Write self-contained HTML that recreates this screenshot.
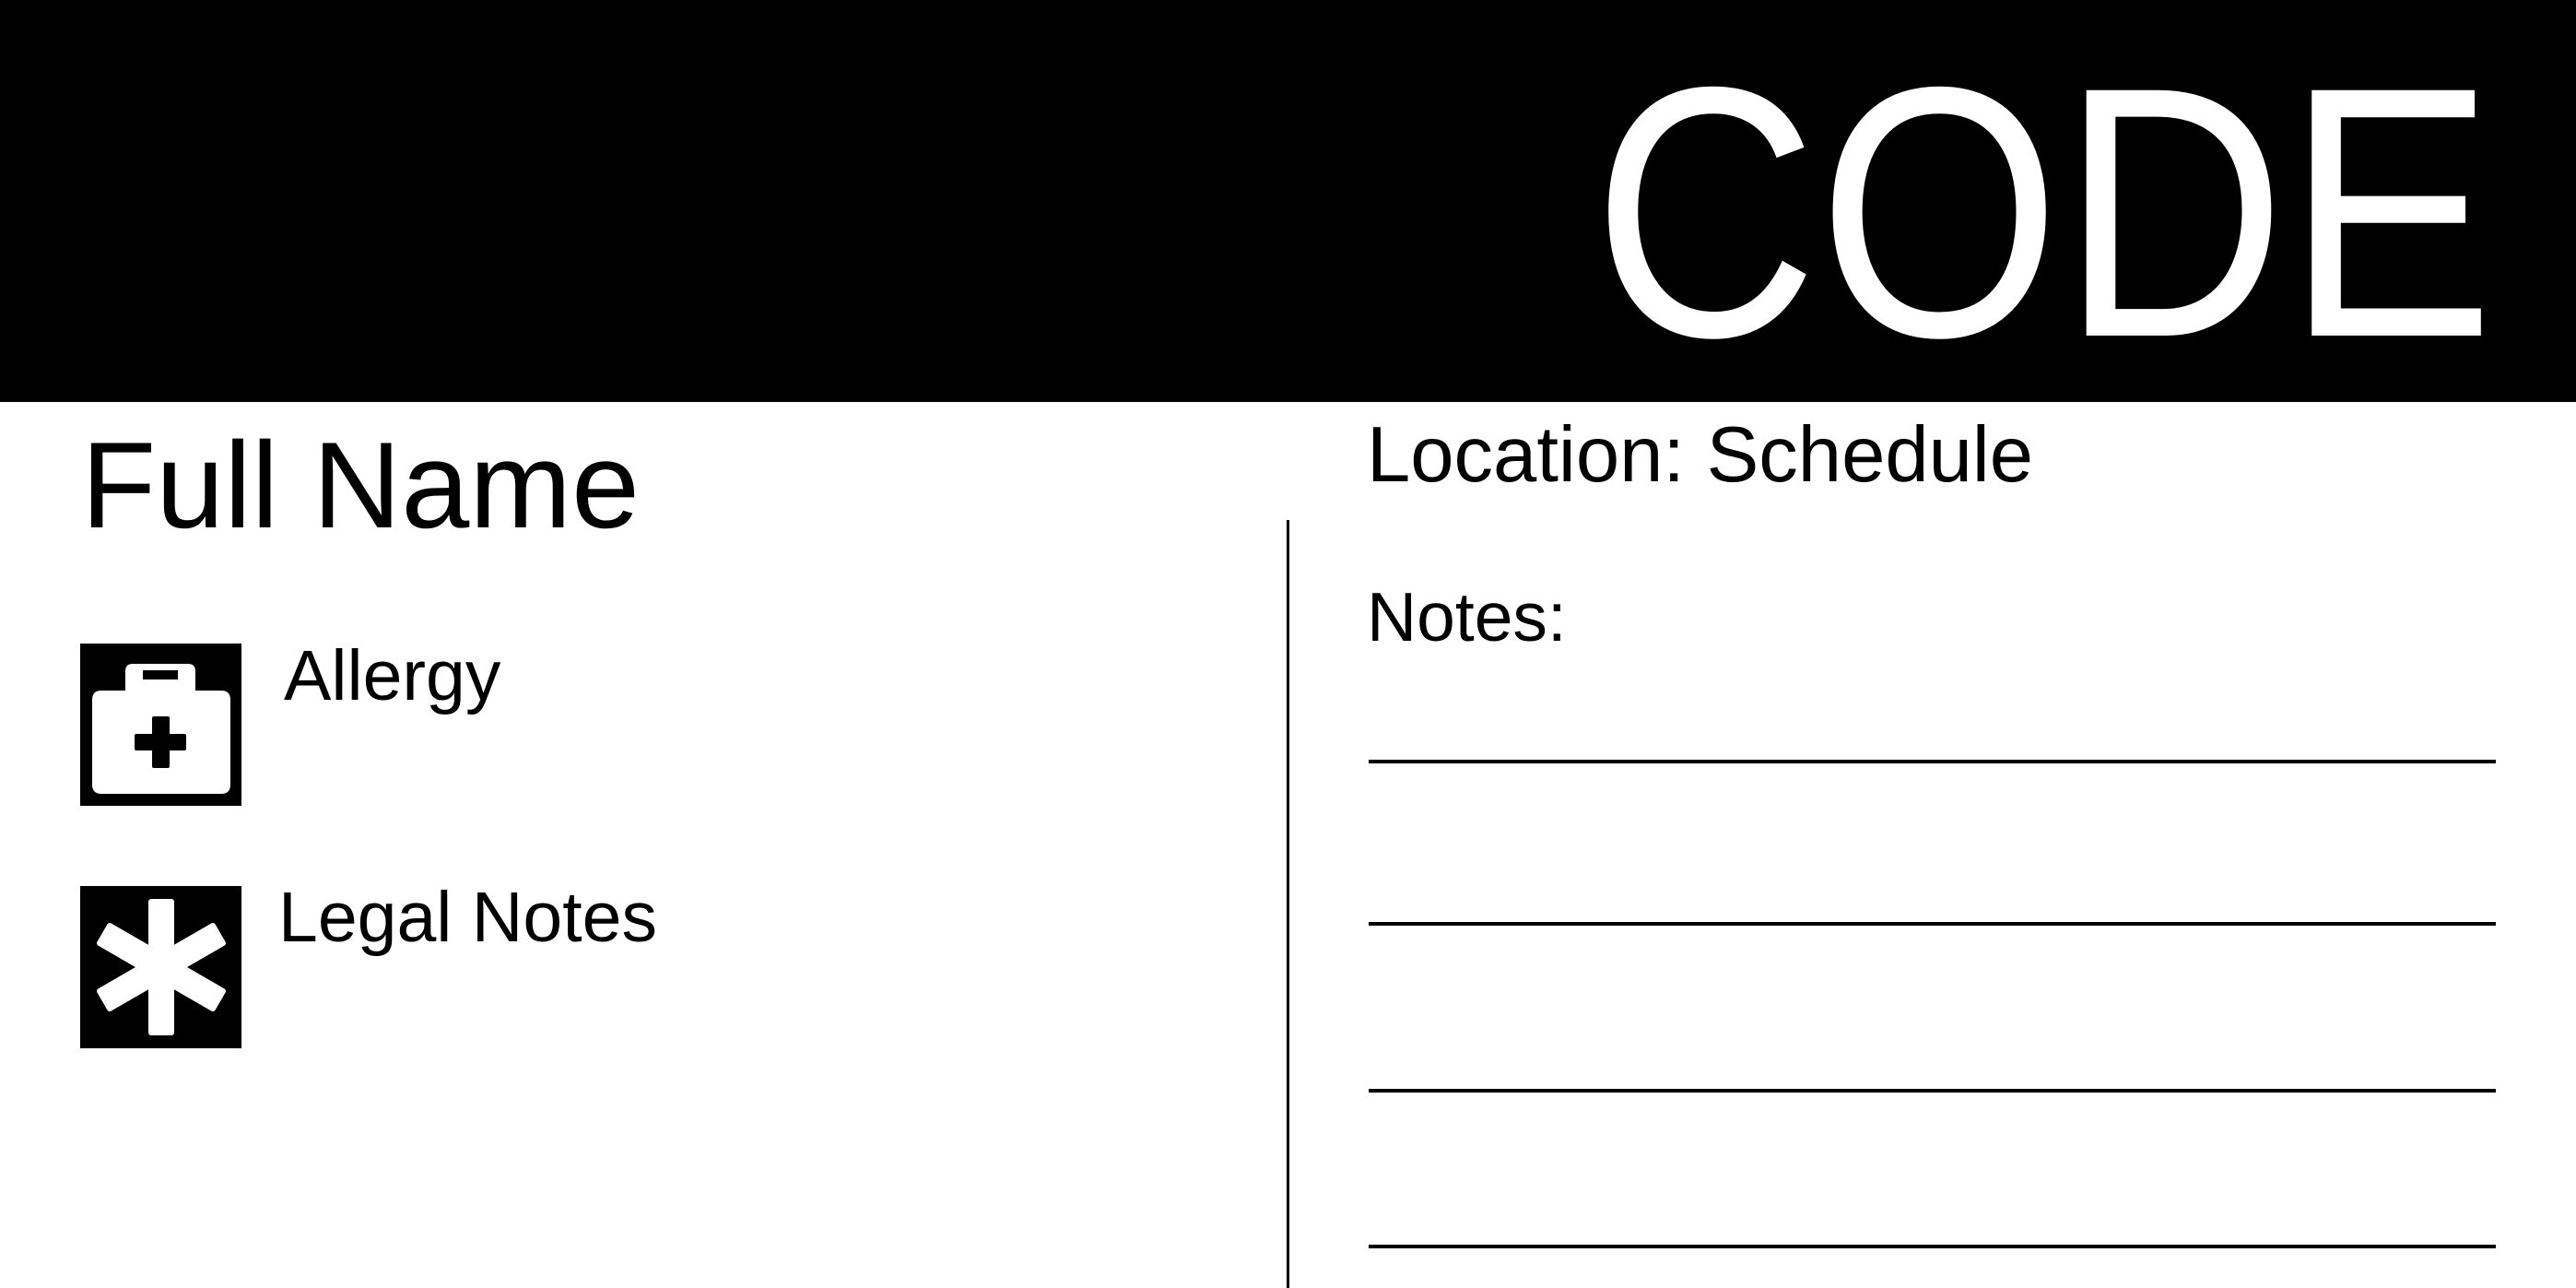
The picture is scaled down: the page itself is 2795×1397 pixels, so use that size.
<!DOCTYPE html>
<html><head><meta charset="utf-8"><style>
html,body{margin:0;padding:0;}
body{width:2795px;height:1397px;position:relative;overflow:hidden;background:#fff;font-family:"Liberation Sans",Arial,sans-serif;color:#000;}
.t{position:absolute;line-height:1;white-space:nowrap;}
#hdr{position:absolute;left:0;top:0;width:2795px;height:436px;background:#000;}
#code{color:#fff;font-size:387px;left:1728px;top:38px;transform:scaleX(0.875);transform-origin:0 0;}
.hl{position:absolute;left:1485px;width:1223px;height:4px;background:#000;}
</style></head><body>
<div id="hdr"></div>
<div class="t" id="code">CODE</div>
<div class="t" style="font-size:133px;left:88px;top:461px;">Full Name</div>

<svg style="position:absolute;left:87px;top:698px" width="175" height="176" viewBox="0 0 175 176">
<rect width="175" height="176" fill="#000"/>
<path fill="#fff" d="M49 51 V30 Q49 22 57 22 H117 Q125 22 125 30 V51 H153 Q163 51 163 61 V153 Q163 163 153 163 H23 Q13 163 13 153 V61 Q13 51 23 51 Z"/>
<rect x="68" y="29" width="38" height="10" fill="#000"/>
<rect x="78" y="79" width="19" height="56" rx="2" fill="#000"/>
<rect x="59" y="98" width="56" height="18" rx="2" fill="#000"/>
</svg>
<div class="t" style="font-size:77px;left:308px;top:695px;">Allergy</div>

<svg style="position:absolute;left:87px;top:961px" width="175" height="176" viewBox="0 0 175 176">
<rect width="175" height="176" fill="#000"/>
<g fill="#fff">
<rect x="74" y="14" width="28" height="148" rx="3"/>
<rect x="74" y="14" width="28" height="148" rx="3" transform="rotate(60 88 88)"/>
<rect x="74" y="14" width="28" height="148" rx="3" transform="rotate(-60 88 88)"/>
</g>
</svg>
<div class="t" style="font-size:77px;left:302px;top:957px;">Legal Notes</div>

<div style="position:absolute;left:1396px;top:564px;width:3px;height:833px;background:#000;"></div>

<div class="t" style="font-size:85px;left:1483px;top:451px;">Location: Schedule</div>
<div class="t" style="font-size:75px;left:1483px;top:632px;">Notes:</div>
<div class="hl" style="top:824px"></div>
<div class="hl" style="top:1000px"></div>
<div class="hl" style="top:1181px"></div>
<div class="hl" style="top:1350px"></div>
</body></html>
